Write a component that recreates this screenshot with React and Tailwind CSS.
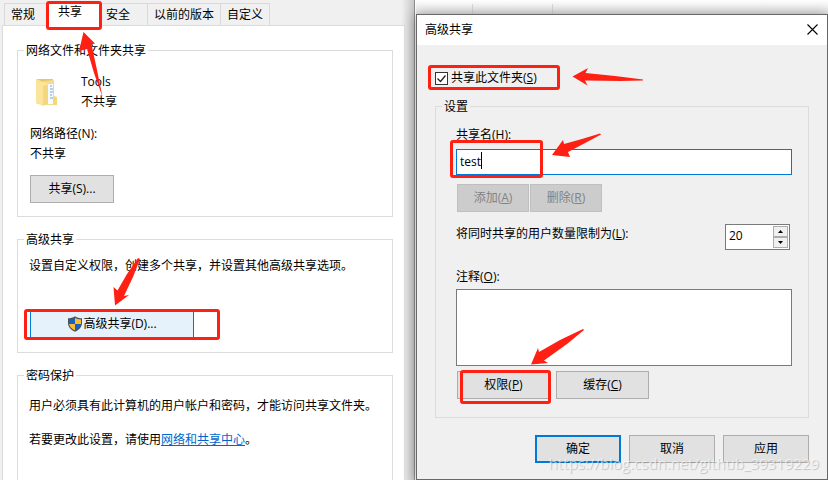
import React, { useState } from 'react';

const tabs = ['常规', '共享', '安全', '以前的版本', '自定义'];

// Red rounded frame drawn over a control
const Frame = ({ className }) => (
  <span
    aria-hidden="true"
    className={`pointer-events-none absolute z-10 rounded-[3px] border-3 border-[#ff2014] ${className}`}
  />
);

const Arrow = ({ className, viewBox, points }) => (
  <svg
    aria-hidden="true"
    viewBox={viewBox}
    className={`pointer-events-none absolute z-10 fill-[#ff2014] ${className}`}
  >
    <polygon points={points} />
  </svg>
);

const Group = ({ title, className = '', legendBg = 'bg-white', children }) => (
  <fieldset className={`min-w-0 border border-[#dcdcdc] ${className}`}>
    <legend className={`ml-1.5 h-4 px-0.5 leading-[18px] ${legendBg}`}>{title}</legend>
    {children}
  </fieldset>
);

const Button = ({ className = '', children, ...props }) => (
  <button
    type="button"
    className={`h-7 border border-[#adadad] bg-[#e1e1e1] text-center disabled:border-[#bfbfbf] disabled:bg-[#cccccc] disabled:text-[#838383] ${className}`}
    {...props}
  >
    {children}
  </button>
);

const FolderIcon = () => (
  <svg viewBox="0 0 22 29" className="h-[29px] w-[22px] shrink-0" aria-hidden="true">
    <path d="M1 1h16v25H1z" fill="#e9c764" />
    <path d="M8 3l10-1v25H9z" fill="#f3dc92" />
    <path d="M12 6h5v20h-5z" fill="#f8fbfd" />
    <path d="M14 8h2M14 11h3M14 14h3M14 17h2M14 20h3" stroke="#6fa8d4" />
    <path d="M17 2l1 16 3 1v8h-4z" fill="#f4d67c" />
    <path d="M0 1l10 4c1 .5 2 1 2 2v18l-5 3-7-3z" fill="#fce49a" />
    <path d="M12 7v18l-5 3V9c0-1 .5-1.500 1.500-2z" fill="#f5d780" />
  </svg>
);

const ShieldIcon = () => (
  <svg viewBox="0 0 16 16" className="size-4 shrink-0" aria-hidden="true">
    <path d="M8 .3C6 1.700 3.500 2.300 1 2.300V7c0 4 3 7 7 8.700C12 14 15 11 15 7V2.300C12.500 2.300 10 1.700 8 .3z" fill="#4a4f55" />
    <path d="M8 1.700C6.200 2.800 4.200 3.300 2 3.400V8h6z" fill="#1464c0" />
    <path d="M8 1.700c1.800 1.100 3.800 1.600 6 1.700V8H8z" fill="#fdb933" />
    <path d="M2.100 8H8v6.500C4.800 13 2.500 11 2.100 8z" fill="#fdb933" />
    <path d="M13.900 8H8v6.500c3.200-1.500 5.500-3.500 5.900-6.500z" fill="#1464c0" />
  </svg>
);

const PropertiesWindow = () => {
  const [activeTab, setActiveTab] = useState('共享');

  return (
    <section className="flex min-w-0 flex-col border-r border-[#8f8f8f] bg-linear-to-r from-[#f0f0f0] from-97% to-[#c9c9c9] pl-0.5">
      {/* Tabs */}
      <div className="relative flex h-[25px] items-end pl-0.5" role="tablist">
        {tabs.map((tab) => (
          <button
            key={tab}
            type="button"
            role="tab"
            aria-selected={tab === activeTab}
            onClick={() => setActiveTab(tab)}
            className={
              tab === activeTab
                ? 'relative -mb-px -ml-1 h-6 w-13 bg-white pb-1 pl-2.5 text-left leading-5'
                : 'h-[22px] min-w-12 border-t border-r border-[#d9d9d9] bg-[#f0f0f0] px-1.5 text-left leading-[22px] first:border-l'
            }
          >
            {tab}
          </button>
        ))}
        <Frame className="top-px left-11 h-[29px] w-14" />
        <Arrow
          className="top-8 left-[77px] h-[65px] w-6"
          viewBox="79 32 24 65"
          points="83.500,32 95,43.500 91.500,44.500 97,70 102.500,97 94,73 87,49 79,51"
        />
      </div>

      <div className="mr-[9px] flex flex-1 flex-col gap-3.5 border border-b-0 border-[#dcdcdc] bg-white pt-4 pr-[11px] pl-3.5">
        <Group title="网络文件和文件夹共享">
          <div className="px-3 pt-3.5 pb-[13px]">
            <div className="flex items-center pl-1.5">
              <FolderIcon />
              <div className="pl-[23px] leading-5">
                <p>Tools</p>
                <p>不共享</p>
              </div>
            </div>
            <div className="mt-3 leading-5">
              <p>网络路径(N):</p>
              <p>不共享</p>
            </div>
            <Button className="mt-[11px] block w-[84px]">共享(S)...</Button>
          </div>
        </Group>

        <Group title="高级共享">
          <div className="px-[11px] pt-[9px] pb-3.5">
            <p className="leading-5">设置自定义权限，创建多个共享，并设置其他高级共享选项。</p>
            <div className="relative mt-[34px] ml-px w-[164px]">
              <button
                type="button"
                className="flex h-7 w-full items-center justify-center border border-[#0078d7] bg-[#e5f1fb]"
              >
                <ShieldIcon />
                <span>高级共享(D)...</span>
              </button>
              <Frame className="-top-px -left-1.5 h-[31px] w-49" />
              <Arrow
                className="-top-13 left-[83px] h-12 w-7"
                viewBox="113 258 28 48"
                points="115,305.500 113.500,287 117.500,290.500 127,274 138,258 140,259 133,277 124,296 129,295"
              />
            </div>
          </div>
        </Group>

        <Group title="密码保护" className="flex-1 border-b-0">
          <div className="px-[11px] pt-[13px] leading-5">
            <p>用户必须具有此计算机的用户帐户和密码，才能访问共享文件夹。</p>
            <p className="mt-3.5">
              若要更改此设置，请使用
              <a href="#network-center" className="text-[#0066cc] underline">网络和共享中心</a>。
            </p>
          </div>
        </Group>
      </div>
    </section>
  );
};

const AdvancedSharingDialog = () => {
  const [shared, setShared] = useState(true);
  const [shareName, setShareName] = useState('test');
  const [limit, setLimit] = useState(20);
  const [comment, setComment] = useState('');

  return (
    <section
      role="dialog"
      aria-label="高级共享"
      className="relative flex flex-1 flex-col border border-[#686868] bg-[#f0f0f0] shadow-[0_0_12px_rgba(0,0,0,0.35)]"
    >
      <header className="flex h-[30px] items-center justify-between bg-white pr-[9px] pl-2">
        <h1>高级共享</h1>
        <button type="button" aria-label="关闭" className="pb-0.5">
          <svg viewBox="0 0 11 11" className="size-[11px]" aria-hidden="true">
            <path d="M.5.5l10 10M10.500.5l-10 10" stroke="#000" strokeWidth="1.100" />
          </svg>
        </button>
      </header>

      <div className="px-[18px] pt-[23px] pb-4">
        <div className="relative flex h-5 items-center">
          <input
            id="share-folder"
            type="checkbox"
            checked={shared}
            onChange={(e) => setShared(e.target.checked)}
            className="peer size-[13px] appearance-none border border-[#333] bg-white"
          />
          <svg viewBox="0 0 13 13" className="pointer-events-none invisible absolute left-0 size-[13px] peer-checked:visible" aria-hidden="true">
            <path d="M2.500 6.500l3 3 5-6" fill="none" stroke="#222" strokeWidth="1.300" />
          </svg>
          <label htmlFor="share-folder" className="pl-[3px]">共享此文件夹(<u>S</u>)</label>
          <Frame className="-top-[3px] -left-[7px] h-[25px] w-33" />
          <Arrow
            className="top-0 left-[137px] h-[18px] w-[71px]"
            viewBox="572 68 71 18"
            points="572.500,76.500 588,68 585.500,73 615,76 643,79.500 643,80.500 620,81 585,80.500 587.500,85.500"
          />
        </div>

        <Group title="设置" legendBg="bg-[#f0f0f0]" className="mt-2.5">
          <div className="pt-[11px] pr-4 pb-[18px] pl-5">
            <label htmlFor="share-name" className="block leading-5">共享名(H):</label>
            <div className="relative mt-1">
              <input
                id="share-name"
                type="text"
                value={shareName}
                onChange={(e) => setShareName(e.target.value)}
                className="block h-[26px] w-full border border-[#0078d7] bg-white px-[3px] pb-0.5 outline-none"
              />
              <span className="absolute top-[3px] left-[25px] h-[17px] w-px bg-black" />
              <Frame className="-top-[9px] -left-1.5 h-[38px] w-[93px]" />
              <Arrow
                className="-top-4 left-24 h-[25px] w-[50px]"
                viewBox="552 133 50 25"
                points="552,155 563,140 564,144 582,139 600,133.500 601,134.500 587,142 568,152 570,157"
              />
            </div>
            <div className="mt-[9px] flex gap-px pl-px">
              <Button disabled className="w-18">添加(<u>A</u>)</Button>
              <Button disabled className="w-18">删除(<u>R</u>)</Button>
            </div>

            <div className="mt-3 flex items-start justify-between pr-0.5">
              <label htmlFor="user-limit" className="leading-5">将同时共享的用户数量限制为(<u>L</u>):</label>
              <div className="flex h-[26px] w-[65px] border border-[#7a7a7a] bg-white">
                <input
                  id="user-limit"
                  type="text"
                  value={limit}
                  onChange={(e) => setLimit(Number(e.target.value) || 0)}
                  className="w-[46px] bg-white pb-0.5 pl-[3px] outline-none"
                />
                <div className="flex flex-1 flex-col bg-white p-px">
                  <button type="button" aria-label="增加" onClick={() => setLimit(limit + 1)} className="flex flex-1 items-center justify-center border border-[#adadad] bg-[#f0f0f0]">
                    <svg viewBox="0 0 5 3" className="h-[3px] w-[5px]"><path d="M0 3l2.500-3L5 3z" /></svg>
                  </button>
                  <button type="button" aria-label="减少" onClick={() => setLimit(Math.max(0, limit - 1))} className="flex flex-1 items-center justify-center border border-[#adadad] bg-[#f0f0f0]">
                    <svg viewBox="0 0 5 3" className="h-[3px] w-[5px]"><path d="M0 0h5L2.500 3z" /></svg>
                  </button>
                </div>
              </div>
            </div>

            <label htmlFor="comment" className="mt-[17px] block leading-5">注释(<u>O</u>):</label>
            <textarea
              id="comment"
              value={comment}
              onChange={(e) => setComment(e.target.value)}
              className="mt-0.5 block h-[77px] w-full resize-none border border-[#7a7a7a] bg-white px-1 outline-none"
            />
            <div className="relative mt-[5px] flex gap-1.5 pl-px">
              <Button className="w-[93px]">权限(<u>P</u>)</Button>
              <Button className="w-[93px]">缓存(<u>C</u>)</Button>
              <Frame className="-top-px left-1 h-[34px] w-[91px]" />
              <Arrow
                className="-top-[42px] left-[75px] h-9 w-[53px]"
                viewBox="531 329 53 36"
                points="531,364.500 538,348 539,352 560,340 583,329 584,330 567,344 544,360.500 548,363"
              />
            </div>
          </div>
        </Group>

        <div className="mt-[17px] flex justify-end gap-2">
          <button type="button" className="h-7 w-[86px] border-2 border-[#0078d7] bg-[#e1e1e1]">确定</button>
          <Button className="w-[86px]">取消</Button>
          <Button className="w-[86px]">应用</Button>
        </div>
      </div>

      <p className="pointer-events-none absolute right-2 bottom-1.5 text-[15px] leading-5 text-white/60 [text-shadow:1px_1px_1px_rgba(0,0,0,0.2)]">
        https://blog.csdn.net/github_39319229
      </p>
    </section>
  );
};

const App = () => (
  <main className="grid min-h-screen grid-cols-[415fr_413fr] overflow-hidden bg-white font-['Open_Sans','Noto_Sans_CJK_SC',sans-serif] text-xs text-black">
    <PropertiesWindow />
    <div className="flex min-w-0 flex-col pl-px">
      <div className="flex h-3.5 items-end gap-[79px] bg-linear-to-b from-white to-[#e6e6e6] pl-14">
        <span className="h-2.5 w-px bg-[#d9d9d9]" />
        <span className="h-2.5 w-px bg-[#d9d9d9]" />
      </div>
      <AdvancedSharingDialog />
    </div>
  </main>
);

export default App;
